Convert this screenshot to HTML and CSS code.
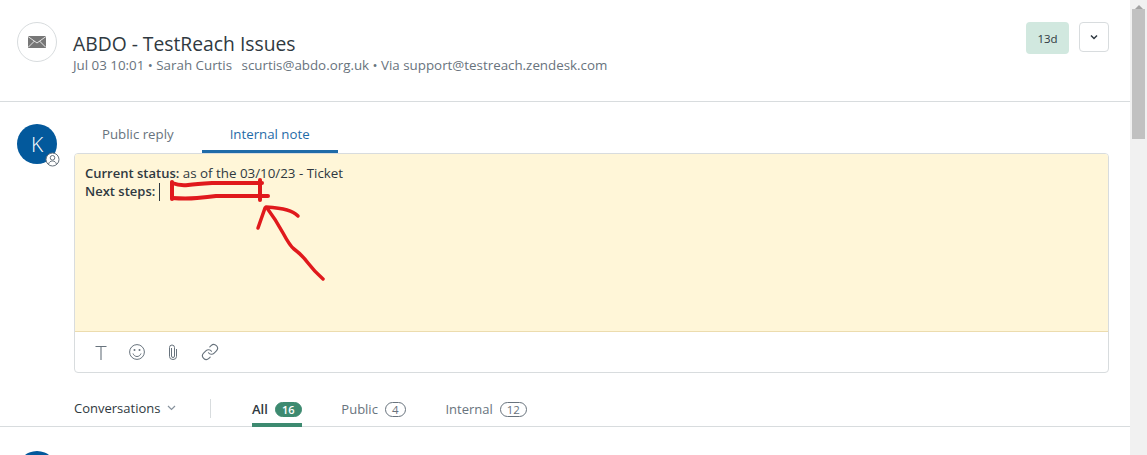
FILE: index.html
```html
<!DOCTYPE html>
<html lang="en">
<head>
    <meta charset="UTF-8">
    <meta name="viewport" content="width=device-width, initial-scale=1.0">
    <title>ABDO - TestReach Issues</title>
    <link rel="stylesheet" href="styles.css">
</head>
<body>

    <div class="main">

        <!-- Ticket header -->
        <div class="ticket-header">
            <div class="channel-icon">
                <svg width="18" height="12" viewBox="0 0 18 12">
                    <rect width="18" height="12" fill="#777"/>
                    <path d="M0 .5 9 7l9-6.500M0 11.500l6.500-6.500M18 11.500 11.500 5" fill="none" stroke="#fff" stroke-width=".8"/>
                </svg>
            </div>
            <div class="ticket-info">
                <h1>ABDO - TestReach Issues</h1>
                <p>Jul 03 10:01 • Sarah Curtis <span class="email">scurtis@abdo.org.uk</span> • Via support@testreach.zendesk.com</p>
            </div>
            <div class="age-badge">13d</div>
            <button class="menu-btn">
                <svg width="8" height="6" viewBox="0 0 8 6"><path d="M1 1.500 4 4.500l3-3" fill="none" stroke="#2f3941" stroke-width="1.500"/></svg>
            </button>
        </div>

        <!-- Composer -->
        <div class="composer">
            <div class="agent">
                <div class="avatar">K</div>
                <div class="agent-mark">
                    <svg width="15" height="15" viewBox="0 0 15 15">
                        <circle cx="7.500" cy="7.500" r="6.500" fill="#fff" stroke="#68737d"/>
                        <circle cx="7.500" cy="5.800" r="2.300" fill="none" stroke="#68737d"/>
                        <path d="M3.600 12c.5-2 2-3 3.900-3s3.400 1 3.900 3" fill="none" stroke="#68737d"/>
                    </svg>
                </div>
            </div>
            <div class="reply">
                <div class="reply-tabs">
                    <div class="reply-tab">Public reply</div>
                    <div class="reply-tab active">Internal note</div>
                </div>
                <div class="reply-box">
                    <div class="note">
                        <div><b>Current status:</b> as of the 03/10/23 - Ticket</div>
                        <div><b>Next steps:</b> <span class="caret"></span></div>
                    </div>
                    <div class="toolbar">
                        <svg width="16" height="16" viewBox="0 0 16 16"><path d="M2.500 2.500h11M8 2.500V16" fill="none" stroke="#68737d" stroke-width="1.100"/></svg>
                        <svg width="16" height="16" viewBox="0 0 16 16">
                            <circle cx="8" cy="8" r="7.400" fill="none" stroke="#68737d"/>
                            <circle cx="5.500" cy="6" r="1" fill="#68737d"/>
                            <circle cx="10.500" cy="6" r="1" fill="#68737d"/>
                            <path d="M4 9.500c.8 2 2.200 3 4 3s3.200-1 4-3" fill="none" stroke="#68737d"/>
                        </svg>
                        <svg width="16" height="16" viewBox="0 0 16 16"><path d="M6.500 4v8a1.500 1.500 0 0 0 3 0V3.500a2.500 2.500 0 0 0-5 0v9a3.500 3 0 0 0 7 0V5" fill="none" stroke="#68737d"/></svg>
                        <svg width="18" height="18" viewBox="0 0 24 24">
                            <g fill="none" stroke="#68737d" stroke-width="1.500" stroke-linecap="round">
                                <path d="M10 13a5 5 0 0 0 7.540.540l3-3a5 5 0 0 0-7.070-7.070l-1.720 1.710"/>
                                <path d="M14 11a5 5 0 0 0-7.540-.540l-3 3a5 5 0 0 0 7.070 7.070l1.710-1.710"/>
                            </g>
                        </svg>
                    </div>
                </div>
            </div>
        </div>

        <!-- Conversation filter -->
        <div class="filter-bar">
            <div class="filter-menu">
                Conversations
                <svg width="9" height="6" viewBox="0 0 9 6"><path d="M1 1l3.500 3.500L8 1" fill="none" stroke="#87929d" stroke-width="1.200"/></svg>
            </div>
            <div class="filter-divider"></div>
            <div class="filter-tabs">
                <div class="filter-tab active">All <span class="count count-solid">16</span></div>
                <div class="filter-tab">Public <span class="count">4</span></div>
                <div class="filter-tab">Internal <span class="count">12</span></div>
            </div>
        </div>

        <div class="next-event">
            <div class="avatar"></div>
        </div>

        <!-- Hand drawn annotation over the note -->
        <svg class="scribble" width="340" height="290" viewBox="0 0 340 290">
            <g fill="none" stroke="#e0191c" stroke-width="4" stroke-linecap="round" stroke-linejoin="round">
                <path d="M172 182V199"/>
                <path d="M172 183Q180 186 188 185T212 183Q235 183 262 183"/>
                <path d="M172 198Q186 199 197 198T216 196Q240 196 268 196"/>
                <path d="M260 180V200"/>
            </g>
            <g fill="none" stroke="#e0191c" stroke-width="3.500" stroke-linecap="round" stroke-linejoin="round">
                <path d="M265 208 258 228"/>
                <path d="M266 207Q280 208 287 210T298 216"/>
                <path d="M267 208Q276 220 283 233T294 249Q302 255 308 263T323 279"/>
            </g>
        </svg>
    </div>

    <div class="scrollbar">
        <div class="scroll-arrow"></div>
        <div class="scroll-thumb"></div>
    </div>

</body>
</html>
```

FILE: styles.css
```css
:root {
    --text: #2f3941;
    --muted: #68737d;
    --line: #d8dcde;
    --blue: #1f6ba8;
    --green: #3d8a70;
}

* {
    box-sizing: border-box;
}

body {
    font-family: "Open Sans", "Liberation Sans", sans-serif;
    font-size: 13px;
    color: var(--text);
    background-color: white;
    margin: 0;
    height: 455px;
    overflow: hidden;
    display: flex;
}

.main {
    position: relative;
    flex: 1;
    min-width: 0;
    height: 455px;
    overflow: hidden;
}

/* Ticket header */
.ticket-header {
    height: 102px;
    padding: 22px 21px 0 17px;
    display: flex;
    align-items: flex-start;
    border-bottom: 1px solid var(--line);
}

.channel-icon {
    width: 40px;
    height: 40px;
    border: 1px solid var(--line);
    border-radius: 50%;
    display: flex;
    align-items: center;
    justify-content: center;
    flex-shrink: 0;
}

.ticket-info {
    flex: 1;
    margin-left: 16px;
    padding-top: 10px;
}

.ticket-info h1 {
    margin: 0;
    font-size: 19.3px;
    font-weight: 500;
    line-height: 24px;
}

.ticket-info p {
    margin: 0;
    color: var(--muted);
    font-size: 13.35px;
    line-height: 18px;
}

.email {
    margin-left: 6px;
}

.age-badge {
    width: 43px;
    height: 32px;
    background-color: #d1e8df;
    border-radius: 4px;
    font-size: 11.5px;
    display: flex;
    align-items: center;
    justify-content: center;
}

.menu-btn {
    width: 30px;
    height: 30px;
    margin-left: 10px;
    padding: 0;
    background: white;
    border: 1px solid var(--line);
    border-radius: 4px;
    display: flex;
    align-items: center;
    justify-content: center;
}

/* Composer */
.composer {
    display: flex;
    padding: 22px 21px 0 17px;
}

.agent {
    position: relative;
    width: 40px;
    height: 40px;
    flex-shrink: 0;
}

.avatar {
    width: 40px;
    height: 40px;
    border-radius: 50%;
    background-color: #03599c;
    color: white;
    font-size: 21px;
    font-weight: 300;
    display: flex;
    align-items: center;
    justify-content: center;
}

.agent-mark {
    position: absolute;
    left: 28px;
    top: 28px;
    width: 15px;
    height: 15px;
    line-height: 0;
}

.reply {
    flex: 1;
    margin-left: 17px;
}

.reply-tabs {
    display: flex;
    height: 29px;
}

.reply-tab {
    padding: 0 28px;
    color: var(--muted);
    font-size: 13.25px;
    line-height: 20px;
}

.reply-tab.active {
    color: var(--blue);
    border-bottom: 3px solid var(--blue);
}

.reply-box {
    height: 220px;
    border: 1px solid var(--line);
    border-radius: 4px;
    overflow: hidden;
}

.note {
    height: 179px;
    padding: 10px 10px 0;
    font-size: 13.35px;
    line-height: 18px;
    background-color: #fff6d8;
    margin: -1px -1px 0;
    border: 1px solid #ecdcae;
}

.note b {
    font-size: 13px;
    font-weight: 600;
}

.caret {
    display: inline-block;
    width: 1px;
    height: 18px;
    background-color: var(--text);
    vertical-align: -5px;
}

.toolbar {
    display: flex;
    align-items: center;
    gap: 20px;
    height: 40px;
    padding-left: 18px;
}

/* Conversation filter */
.filter-bar {
    display: flex;
    align-items: flex-start;
    height: 54px;
    padding: 26px 0 0 74px;
    border-bottom: 1px solid var(--line);
}

.filter-menu {
    width: 136px;
    height: 18px;
    line-height: 18px;
    display: flex;
    align-items: center;
    gap: 7px;
}

.filter-divider {
    width: 1px;
    height: 19px;
    background-color: var(--line);
}

.filter-tabs {
    display: flex;
    margin-left: 41px;
    gap: 39.5px;
}

.filter-tab {
    height: 28px;
    flex-shrink: 0;
    color: var(--muted);
    line-height: 20px;
    display: flex;
    align-items: flex-start;
    gap: 7px;
}

.filter-tab.active {
    color: var(--text);
    font-weight: 600;
    border-bottom: 4px solid var(--green);
}

.count {
    margin-top: 3px;
    min-width: 21px;
    height: 15px;
    padding: 0 6px;
    border: 1px solid var(--muted);
    border-radius: 8px;
    font-size: 11.5px;
    font-weight: 400;
    line-height: 13px;
    text-align: center;
}

.count-solid {
    min-width: 27px;
    padding: 0;
    background-color: var(--green);
    border-color: var(--green);
    color: white;
    font-size: 11px;
    font-weight: 600;
}

.next-event {
    padding: 24px 0 0 17px;
}

/* Annotation */
.scribble {
    position: absolute;
    left: 0;
    top: 0;
}

/* Window scrollbar */
.scrollbar {
    width: 17px;
    height: 455px;
    background-color: #f1f1f1;
    padding: 0 2px;
}

.scroll-arrow {
    width: 0;
    margin: 0 auto;
    height: 9px;
    border-left: 4px solid transparent;
    border-right: 4px solid transparent;
    border-bottom: 4px solid #a3a3a3;
}

.scroll-thumb {
    height: 130px;
    background-color: #c1c1c1;
}
```
